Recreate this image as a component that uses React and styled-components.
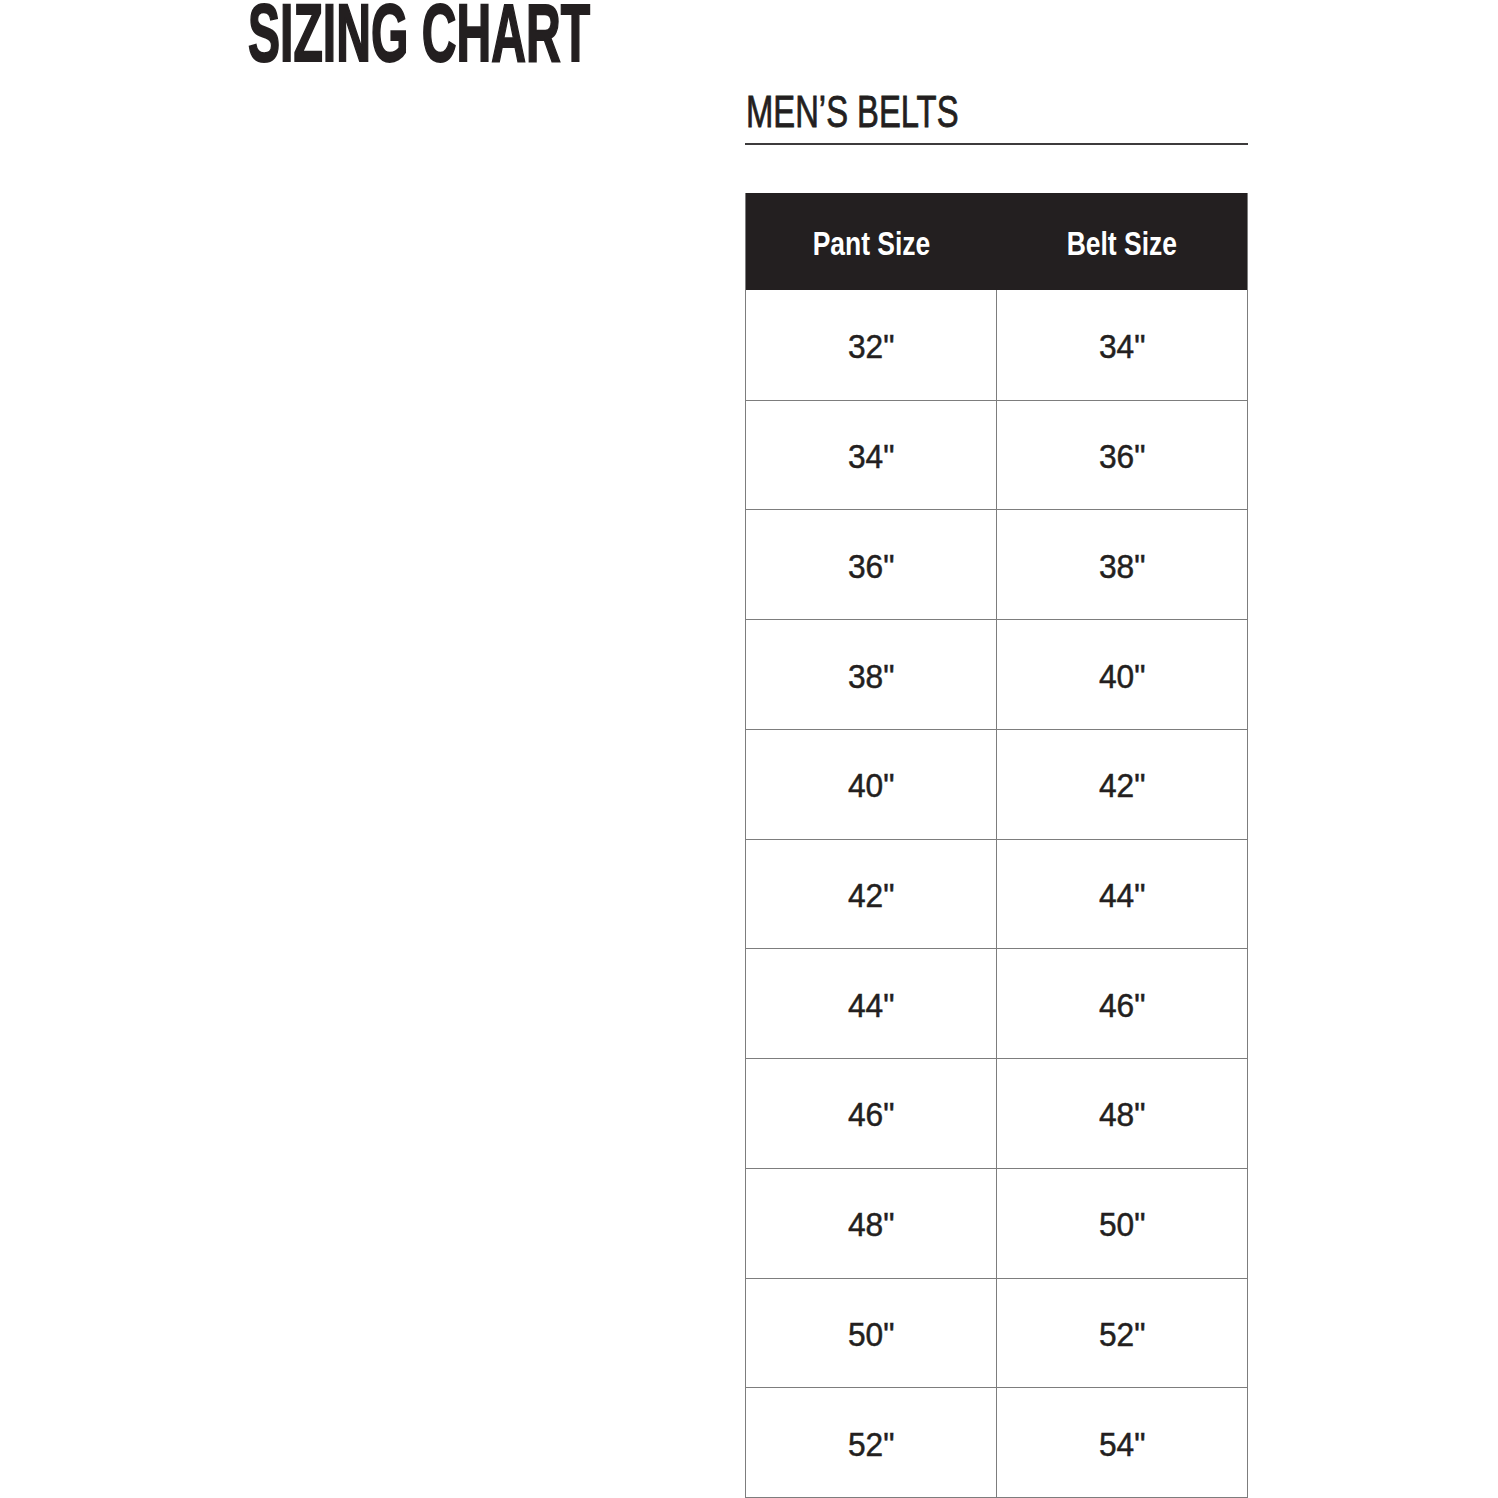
import React from 'react';
import styled, { createGlobalStyle } from 'styled-components';

const rows = [
    ['32"', '34"'],
    ['34"', '36"'],
    ['36"', '38"'],
    ['38"', '40"'],
    ['40"', '42"'],
    ['42"', '44"'],
    ['44"', '46"'],
    ['46"', '48"'],
    ['48"', '50"'],
    ['50"', '52"'],
    ['52"', '54"'],
];

const GlobalStyle = createGlobalStyle`
    html, body {
        margin: 0;
        padding: 0;
        background: #ffffff;
    }
    body {
        font-family: "Liberation Sans", Arial, sans-serif;
        color: #231f20;
    }
`;

function App() {
    return (
        <Page>
            <GlobalStyle />
            <Title>
                <Squeeze $x={0.594} $origin='left'>SIZING CHART</Squeeze>
            </Title>
            <Section>
                <Heading>
                    <Squeeze $x={0.745} $origin='left'>MEN’S BELTS</Squeeze>
                </Heading>
                <Chart>
                    <HeadCell $left>
                        <Squeeze $x={0.79}>Pant Size</Squeeze>
                    </HeadCell>
                    <HeadCell>
                        <Squeeze $x={0.79}>Belt Size</Squeeze>
                    </HeadCell>
                    {rows.map(([pant, belt], i) => (
                        <React.Fragment key={pant}>
                            <Cell $left $first={i === 0}>
                                <Squeeze $x={0.96}>{pant}</Squeeze>
                            </Cell>
                            <Cell $first={i === 0}>
                                <Squeeze $x={0.96}>{belt}</Squeeze>
                            </Cell>
                        </React.Fragment>
                    ))}
                </Chart>
            </Section>
        </Page>
    );
}

export default App;

const Page = styled.div`
    width: 1498px;
    height: 1498px;
    display: flex;
    flex-direction: column;
    overflow: hidden;
`;

const Squeeze = styled.span`
    display: inline-block;
    white-space: nowrap;
    transform: scaleX(${p => p.$x});
    transform-origin: ${p => p.$origin || 'center'} center;
`;

const Title = styled.h1`
    margin: 0 0 0 248px;
    font-size: 81px;
    line-height: 66px;
    font-weight: 700;
    -webkit-text-stroke: 2px #231f20;
    color: #231f20;
`;

const Section = styled.div`
    margin-left: 745px;
    width: 503px;
    display: flex;
    flex-direction: column;
`;

const Heading = styled.h2`
    margin: 24px 0 0 0;
    padding: 0 0 9px 1px;
    font-size: 44px;
    line-height: 44px;
    font-weight: 400;
    color: #231f20;
    -webkit-text-stroke: 0.8px #231f20;
    border-bottom: 2px solid #3d3b3c;
`;

const Chart = styled.div`
    margin-top: 48px;
    height: 1304px;
    display: grid;
    grid-template-columns: 251px 1fr;
    grid-template-rows: 97px repeat(11, 1fr);
    border: 1px solid #7d7d7d;
    border-top: none;
`;

const HeadCell = styled.div`
    display: flex;
    align-items: center;
    justify-content: center;
    padding-top: 4px;
    background: #231f20;
    color: #ffffff;
    font-size: 33.5px;
    line-height: 1;
    font-weight: 700;
`;

const Cell = styled.div`
    display: flex;
    align-items: center;
    justify-content: center;
    padding-top: 3px;
    border-top: ${p => (p.$first ? 'none' : '1px solid #7d7d7d')};
    border-right: ${p => (p.$left ? '1px solid #7d7d7d' : 'none')};
    font-size: 33px;
    line-height: 1;
    font-weight: 400;
    color: #231f20;
    -webkit-text-stroke: 0.5px #231f20;
`;
